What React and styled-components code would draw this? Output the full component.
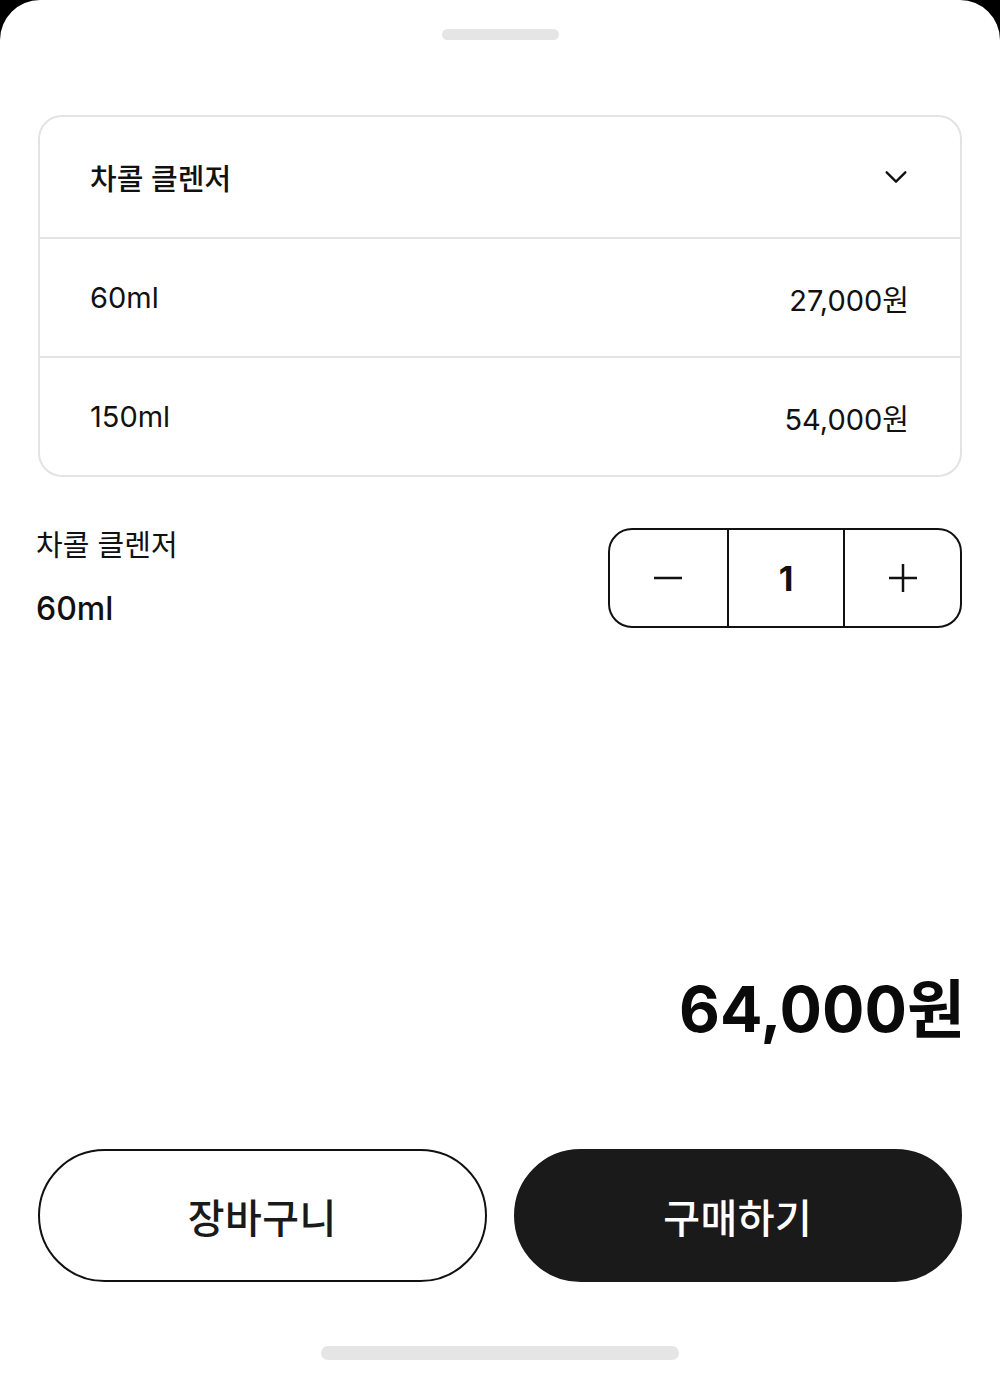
import React, { useState } from 'react';
import styled, { createGlobalStyle } from 'styled-components';

const GlobalStyle = createGlobalStyle`
  html, body {
    margin: 0;
    padding: 0;
    background: #000;
  }
  body {
    font-family: Inter, 'Noto Sans CJK KR', 'Noto Sans', sans-serif;
    color: #111;
  }
  * {
    box-sizing: border-box;
  }
`;

const Sheet = styled.div`
  width: 1000px;
  height: 1380px;
  background: #fff;
  border-radius: 40px 40px 0 0;
  display: flex;
  flex-direction: column;
  padding: 0 38px;
`;

const Handle = styled.div`
  align-self: center;
  width: ${({ $width }) => $width}px;
  height: ${({ $height }) => $height}px;
  border-radius: 8px;
  background: #e5e5e5;
  margin-top: ${({ $top }) => $top}px;
`;

const OptionCard = styled.div`
  margin-top: 75px;
  border: 2px solid #e3e3e3;
  border-radius: 24px;
  display: flex;
  flex-direction: column;
`;

const OptionRow = styled.div`
  height: ${({ $head }) => ($head ? 120 : 119)}px;
  display: flex;
  align-items: center;
  justify-content: space-between;
  padding: 0 51px 0 50px;
  font-size: 29px;
  font-weight: ${({ $head }) => ($head ? 500 : 400)};
  color: #111;
  & + & {
    border-top: 2px solid #e3e3e3;
  }
`;

const Chevron = styled.svg`
  width: 28px;
  height: 28px;
  margin-right: -1px;
`;

const Selected = styled.div`
  margin-top: 51px;
  display: flex;
  justify-content: space-between;
  align-items: flex-start;
`;

const SelectedInfo = styled.div`
  display: flex;
  flex-direction: column;
  gap: 26px;
  margin-left: -2px;
`;

const SelectedName = styled.div`
  font-size: 29px;
  font-weight: 400;
  line-height: 36px;
`;

const SelectedSize = styled.div`
  font-size: 32px;
  font-weight: 500;
  line-height: 38px;
`;

const Stepper = styled.div`
  width: 354px;
  height: 100px;
  border: 2.5px solid #111;
  border-radius: 24px;
  display: grid;
  grid-template-columns: 1fr 1fr 1fr;
  overflow: hidden;
`;

const StepCell = styled.button`
  border: none;
  background: none;
  padding: 0;
  display: flex;
  align-items: center;
  justify-content: center;
  font-family: inherit;
  font-size: 34px;
  font-weight: 700;
  color: #111;
  & + & {
    border-left: 2.5px solid #111;
  }
`;

const Total = styled.div`
  margin-top: 341px;
  text-align: right;
  font-size: 63px;
  font-weight: 700;
  line-height: 80px;
  margin-right: -3px;
  color: #0a0a0a;
`;

const Actions = styled.div`
  margin-top: 100px;
  display: grid;
  grid-template-columns: 1fr 1fr;
  gap: 27px;
`;

const ActionButton = styled.button`
  height: 133px;
  border-radius: 67px;
  border: 2.5px solid ${({ $primary }) => ($primary ? '#1a1a1a' : '#111')};
  background: ${({ $primary }) => ($primary ? '#1a1a1a' : '#fff')};
  color: ${({ $primary }) => ($primary ? '#fff' : '#1a1a1a')};
  font-family: inherit;
  font-size: 40px;
  font-weight: 500;
  letter-spacing: 0.5px;
`;

const options = [
  { size: '60ml', price: '27,000원' },
  { size: '150ml', price: '54,000원' },
];

export default function App() {
  const [count, setCount] = useState(1);

  return (
    <>
      <GlobalStyle />
      <Sheet>
        <Handle $width={117} $height={11} $top={29} />
        <OptionCard>
          <OptionRow $head>
            <span>차콜 클렌저</span>
            <Chevron viewBox="0 0 24 24" fill="none" stroke="#111" strokeWidth="2" strokeLinecap="round" strokeLinejoin="round">
              <path d="M4 8l8 8 8-8" />
            </Chevron>
          </OptionRow>
          {options.map((o) => (
            <OptionRow key={o.size}>
              <span>{o.size}</span>
              <span>{o.price}</span>
            </OptionRow>
          ))}
        </OptionCard>
        <Selected>
          <SelectedInfo>
            <SelectedName>차콜 클렌저</SelectedName>
            <SelectedSize>60ml</SelectedSize>
          </SelectedInfo>
          <Stepper>
            <StepCell onClick={() => setCount((c) => Math.max(1, c - 1))}>
              <svg width="30" height="30" viewBox="0 0 30 30" stroke="#111" strokeWidth="2.5">
                <path d="M1 15h28" />
              </svg>
            </StepCell>
            <StepCell as="div">{count}</StepCell>
            <StepCell onClick={() => setCount((c) => c + 1)}>
              <svg width="30" height="30" viewBox="0 0 30 30" stroke="#111" strokeWidth="2.5">
                <path d="M1 15h28M15 1v28" />
              </svg>
            </StepCell>
          </Stepper>
        </Selected>
        <Total>64,000원</Total>
        <Actions>
          <ActionButton>장바구니</ActionButton>
          <ActionButton $primary>구매하기</ActionButton>
        </Actions>
        <Handle $width={358} $height={14} $top={64} />
      </Sheet>
    </>
  );
}
